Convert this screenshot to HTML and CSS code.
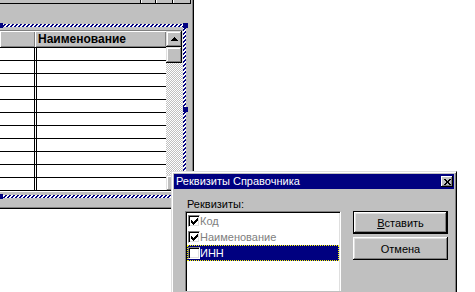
FILE: index.html
```html
<!DOCTYPE html>
<html lang="ru">
<head>
    <meta charset="UTF-8">
    <title>Реквизиты Справочника</title>
    <link rel="stylesheet" href="styles.css">
</head>
<body>
    <!-- окно формы справочника (в режиме редактирования) -->
    <div class="form-win">
        <div class="win-top">
            <span class="win-top-line"></span>
            <span class="win-top-btn"></span>
            <span class="win-top-btn wide"></span>
            <span class="win-top-btn wider"></span>
            <span class="win-top-end"></span>
        </div>
        <div class="sel-frame">
            <span class="handle h-tl"></span>
            <span class="handle h-tr"></span>
            <span class="handle h-mr"></span>
            <span class="handle h-bl"></span>
            <div class="sel-inner">
                <div class="grid">
                    <div class="grid-main">
                        <div class="grid-head">
                            <div class="hcell c1"></div>
                            <div class="hcell c2">Наименование</div>
                        </div>
                        <div class="grid-row"><div class="c1"></div><div class="c2"></div></div>
                        <div class="grid-row"><div class="c1"></div><div class="c2"></div></div>
                        <div class="grid-row"><div class="c1"></div><div class="c2"></div></div>
                        <div class="grid-row"><div class="c1"></div><div class="c2"></div></div>
                        <div class="grid-row"><div class="c1"></div><div class="c2"></div></div>
                        <div class="grid-row"><div class="c1"></div><div class="c2"></div></div>
                        <div class="grid-row"><div class="c1"></div><div class="c2"></div></div>
                        <div class="grid-row"><div class="c1"></div><div class="c2"></div></div>
                        <div class="grid-row"><div class="c1"></div><div class="c2"></div></div>
                        <div class="grid-row"><div class="c1"></div><div class="c2"></div></div>
                        <div class="grid-row"><div class="c1"></div><div class="c2"></div></div>
                    </div>
                    <div class="vscroll">
                        <div class="sb-btn">
                            <svg width="7" height="4" viewBox="0 0 7 4" shape-rendering="crispEdges"><path d="M3 0h1v1H3z M2 1h3v1H2z M1 2h5v1H1z M0 3h7v1H0z" fill="#000"/></svg>
                        </div>
                        <div class="sb-thumb"></div>
                        <div class="sb-track"></div>
                        <div class="sb-btn">
                            <svg width="7" height="4" viewBox="0 0 7 4" shape-rendering="crispEdges"><path d="M0 0h7v1H0z M1 1h5v1H1z M2 2h3v1H2z M3 3h1v1H3z" fill="#000"/></svg>
                        </div>
                    </div>
                </div>
            </div>
        </div>
    </div>

    <!-- диалог выбора реквизитов -->
    <div class="dialog">
        <div class="dlg-title">
            <span>Реквизиты Справочника</span>
            <span class="dlg-close">
                <svg width="7" height="6" viewBox="0 0 7 6" shape-rendering="crispEdges"><path d="M0 0h2v1H0z M5 0h2v1H5z M1 1h2v1H1z M4 1h2v1H4z M2 2h3v2H2z M1 4h2v1H1z M4 4h2v1H4z M0 5h2v1H0z M5 5h2v1H5z" fill="#000"/></svg>
            </span>
        </div>
        <div class="dlg-body">
            <div class="dlg-fields">
                <div class="dlg-label">Реквизиты:</div>
                <div class="listbox">
                    <div class="li disabled">
                        <span class="chk"><svg width="7" height="7" viewBox="0 0 7 7" shape-rendering="crispEdges"><path d="M0 2h1v3H0z M1 3h1v3H1z M2 4h1v3H2z M3 3h1v3H3z M4 2h1v3H4z M5 1h1v3H5z M6 0h1v3H6z" fill="#000"/></svg></span>Код
                    </div>
                    <div class="li disabled">
                        <span class="chk"><svg width="7" height="7" viewBox="0 0 7 7" shape-rendering="crispEdges"><path d="M0 2h1v3H0z M1 3h1v3H1z M2 4h1v3H2z M3 3h1v3H3z M4 2h1v3H4z M5 1h1v3H5z M6 0h1v3H6z" fill="#000"/></svg></span>Наименование
                    </div>
                    <div class="li selected">
                        <span class="chk"></span>ИНН
                    </div>
                </div>
            </div>
            <div class="dlg-buttons">
                <button class="btn default"><u>В</u>ставить</button>
                <button class="btn">Отмена</button>
            </div>
        </div>
    </div>
</body>
</html>
```

FILE: styles.css
```css
* {
    margin: 0;
    padding: 0;
    box-sizing: border-box;
}

body {
    width: 475px;
    height: 292px;
    overflow: hidden;
    position: relative;
    background: #fff;
    font-family: "Liberation Sans", Arial, sans-serif;
    font-size: 11px;
    color: #000;
}

/* окно формы */
.form-win {
    width: 194px;
    height: 209px;
    background: #c0c0c0;
    border-right: 1px solid #000;
    border-bottom: 1px solid #000;
    box-shadow: inset -1px -1px #808080;
}

.win-top {
    display: flex;
    height: 4px;
    margin-bottom: 20px;
}

.win-top-line {
    width: 140px;
    border-bottom: 1px solid #000;
}

.win-top-btn {
    width: 15px;
    border-left: 1px solid #000;
    border-bottom: 1px solid #000;
    box-shadow: inset 1px 0 #fff;
}

.win-top-btn.wide { width: 17px; }
.win-top-btn.wider { width: 18px; }

.win-top-end {
    flex: 1;
    border-left: 1px solid #000;
}

/* рамка выделенного элемента */
.sel-frame {
    position: relative;
    width: 186px;
    padding: 3px 3px 3px 0;
    background: repeating-linear-gradient(135deg, #000080 0 1.9px, #fff 1.9px 2.83px);
}

.sel-inner {
    background: #c0c0c0;
    padding: 3px 0;
}

.handle {
    position: absolute;
    width: 5px;
    height: 5px;
    background: #000080;
}

.h-tl { left: -2px; top: -1px; }
.h-tr { right: -2px; top: -1px; }
.h-mr { right: -2px; top: 83px; }
.h-bl { left: -2px; bottom: -1px; }

/* таблица */
.grid {
    display: flex;
    width: 183px;
    background: #fff;
    border-top: 1px solid #808080;
    border-right: 1px solid #dfdfdf;
    border-bottom: 1px solid #fff;
}

.grid-main {
    width: 166px;
    border-bottom: 1px solid #000;
}

.grid-head {
    display: flex;
    height: 16px;
    background: #c0c0c0;
}

.hcell {
    box-shadow: inset 1px 1px #fff, inset -1px -1px #808080;
    line-height: 16px;
    font-size: 12px;
    font-weight: bold;
    padding-left: 3px;
    white-space: nowrap;
    overflow: hidden;
}

.hcell.c1 { width: 35px; }
.hcell.c2 { flex: 1; }

.grid-row {
    display: flex;
    height: 13px;
    border-top: 1px solid #000;
}

.grid-row .c1 {
    width: 35px;
    border-right: 1px solid #000;
}

.grid-row .c2 {
    flex: 1;
    margin-left: 1px;
    border-left: 1px solid #000;
}

.vscroll {
    width: 16px;
    display: flex;
    flex-direction: column;
}

.sb-btn,
.sb-thumb {
    height: 16px;
    background: #c0c0c0;
    box-shadow: inset -1px -1px #000, inset 1px 1px #dfdfdf, inset -2px -2px #808080, inset 2px 2px #fff;
}

.sb-btn {
    display: flex;
    align-items: center;
    justify-content: center;
}

.sb-btn svg { display: block; }

.sb-track {
    flex: 1;
    background: conic-gradient(#fff 25%, #c0c0c0 0 50%, #fff 0 75%, #c0c0c0 0);
    background-size: 2px 2px;
}

/* диалог */
.dialog {
    position: absolute;
    left: 171px;
    top: 171px;
    width: 286px;
    height: 121px;
    overflow: hidden;
    background: #c0c0c0;
    border: 1px solid;
    border-bottom: none;
    border-color: #dfdfdf #000 #000 #dfdfdf;
    box-shadow: inset 1px 1px #fff, inset -1px 0 #808080;
    padding: 2px 2px 0;
}

.dlg-title {
    height: 15px;
    line-height: 15px;
    background: #000080;
    color: #fff;
    display: flex;
    align-items: center;
    justify-content: space-between;
    padding: 0 1px 0 2px;
}

.dlg-close {
    width: 12px;
    height: 11px;
    background: #c0c0c0;
    box-shadow: inset -1px -1px #000, inset 1px 1px #fff, inset -2px -2px #808080;
    display: flex;
    align-items: center;
    justify-content: center;
}

.dlg-close svg { display: block; }

.dlg-body {
    display: flex;
    gap: 12px;
    padding: 9px 0 0 11px;
}

.dlg-fields { width: 156px; }

.dlg-label {
    line-height: 13px;
    padding-left: 2px;
}

.listbox {
    height: 80px;
    background: #fff;
    border: 1px solid;
    border-bottom: none;
    border-color: #808080 #fff #fff #808080;
    box-shadow: inset 1px 1px #000, inset -1px 0 #dfdfdf;
    padding: 1px 1px 0;
}

.li {
    display: flex;
    align-items: center;
    height: 16px;
    line-height: 16px;
    white-space: nowrap;
}

.li.disabled { color: #808080; }

.li.selected {
    background: #000080;
    color: #fff;
    outline: 1px dotted #ffff00;
    outline-offset: -1px;
}

.chk {
    width: 12px;
    height: 12px;
    margin: 0 0 0 1px;
    background: #fff;
    border: 1px solid;
    border-color: #808080 #fff #fff #808080;
    box-shadow: inset 1px 1px #000, inset -1px -1px #dfdfdf;
    display: flex;
    align-items: center;
    justify-content: center;
}

.chk svg { display: block; }

.dlg-buttons {
    display: flex;
    flex-direction: column;
    gap: 3px;
    width: 95px;
    margin-top: 13px;
}

.btn {
    height: 23px;
    font: inherit;
    color: #000;
    background: #c0c0c0;
    border: none;
    box-shadow: inset -1px -1px #000, inset 1px 1px #fff, inset -2px -2px #808080, inset 2px 2px #dfdfdf;
}

.btn.default { border: 1px solid #000; }
```
